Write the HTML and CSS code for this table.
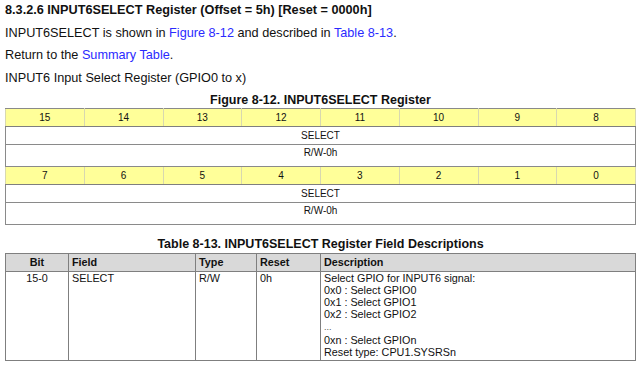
FILE: index.html
```html
<!DOCTYPE html>
<html>
<head>
<meta charset="utf-8">
<link rel="stylesheet" href="styles.css">
</head>
<body>
<div class="page">
  <h3 class="heading">8.3.2.6 INPUT6SELECT Register (Offset = 5h) [Reset = 0000h]</h3>
  <p class="para">INPUT6SELECT is shown in <a class="link" href="#">Figure 8-12</a> and described in <a class="link" href="#">Table 8-13</a>.</p>
  <p class="para">Return to the <a class="link" href="#">Summary Table</a>.</p>
  <p class="para">INPUT6 Input Select Register (GPIO0 to x)</p>
  <div class="caption">Figure 8-12. INPUT6SELECT Register</div>
  <table class="reg">
    <tr class="bits"><td>15</td><td>14</td><td>13</td><td>12</td><td>11</td><td>10</td><td>9</td><td>8</td></tr>
    <tr class="name"><td colspan="8">SELECT</td></tr>
    <tr class="access"><td colspan="8">R/W-0h</td></tr>
    <tr class="bits second"><td>7</td><td>6</td><td>5</td><td>4</td><td>3</td><td>2</td><td>1</td><td>0</td></tr>
    <tr class="name"><td colspan="8">SELECT</td></tr>
    <tr class="access"><td colspan="8">R/W-0h</td></tr>
  </table>
  <div class="caption caption2">Table 8-13. INPUT6SELECT Register Field Descriptions</div>
  <table class="fields">
    <tr class="head">
      <th class="c-bit">Bit</th>
      <th class="c-field">Field</th>
      <th class="c-type">Type</th>
      <th class="c-reset">Reset</th>
      <th class="c-desc">Description</th>
    </tr>
    <tr class="row">
      <td class="c-bit">15-0</td>
      <td class="c-field">SELECT</td>
      <td class="c-type">R/W</td>
      <td class="c-reset">0h</td>
      <td class="c-desc">Select GPIO for INPUT6 signal:<br>0x0 : Select GPIO0<br>0x1 : Select GPIO1<br>0x2 : Select GPIO2<br><span class="dots">...</span><br>0xn : Select GPIOn<br>Reset type: CPU1.SYSRSn</td>
    </tr>
  </table>
</div>
</body>
</html>
```

FILE: styles.css
```css
html, body {
  margin: 0;
  padding: 0;
  background: #ffffff;
}
body {
  font-family: "Liberation Sans", Arial, sans-serif;
  color: #111111;
}
.page {
  padding: 2px 4px 0 5px;
}
.heading {
  margin: 0;
  font-size: 12.7px;
  font-weight: bold;
  line-height: 16px;
}
.para {
  margin: 6.5px 0 0 0;
  font-size: 12.7px;
  line-height: 16px;
}
.link {
  color: #2a2aff;
  text-decoration: none;
}
.caption {
  margin-top: 7px;
  text-align: center;
  font-weight: bold;
  font-size: 12.5px;
  line-height: 14px;
}
.caption2 {
  margin-top: 12px;
}
.reg {
  width: 631px;
  border-collapse: collapse;
  table-layout: fixed;
  font-size: 10px;
  margin-top: 1px;
  border: 1.5px solid #7f7f7f;
}
.reg td {
  border: 1px solid #8a8a8a;
  padding: 0;
}
.reg .bits td {
  background: #ffff99;
  text-align: center;
  height: 17px;
  border-left-color: #d8d8b0;
  border-right-color: #d8d8b0;
  border-bottom: 1.5px solid #7f7f7f;
}
.reg .second td {
  border-top: 1.5px solid #7f7f7f;
}
.reg .name td {
  text-align: center;
  height: 17px;
}
.reg .access td {
  text-align: center;
  vertical-align: top;
  height: 22px;
  padding-top: 2px;
  box-sizing: border-box;
  line-height: 12px;
}
.fields {
  margin-top: 2px;
  width: 631px;
  border-collapse: collapse;
  table-layout: fixed;
  font-size: 10.8px;
  border: 1.5px solid #7f7f7f;
}
.fields th, .fields td {
  border: 1px solid #7f7f7f;
  padding: 0 3px;
  text-align: left;
  vertical-align: top;
}
.fields th {
  background: #d9d9d9;
  font-weight: bold;
  height: 17px;
  vertical-align: middle;
  border-bottom: 1.5px solid #7f7f7f;
}
.fields td {
  line-height: 12.2px;
  padding-top: 0;
  height: 88px;
}
.fields .c-bit { width: 56px; text-align: center; }
.fields .c-field { width: 120px; }
.fields .c-type { width: 54px; }
.fields .c-reset { width: 57px; }
.dots {
  font-size: 9px;
  color: #555;
}
```
